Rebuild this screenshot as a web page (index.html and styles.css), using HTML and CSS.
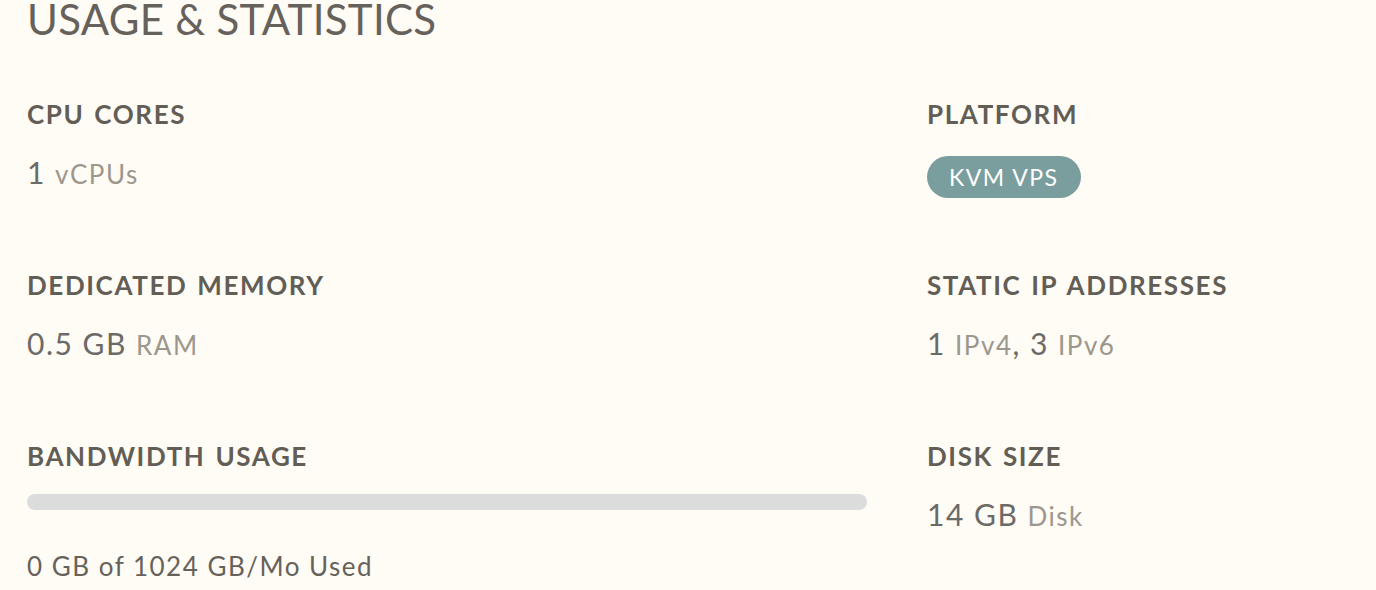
FILE: index.html
```html
<!DOCTYPE html>
<html lang="en">
<head>
    <meta charset="UTF-8">
    <meta name="viewport" content="width=device-width, initial-scale=1.0">
    <title>Usage &amp; Statistics</title>
    <link rel="stylesheet" href="styles.css">
</head>
<body>
    <div class="usage">
        <h2 class="usage-title">USAGE &amp; STATISTICS</h2>

        <div class="stats-grid">
            <div class="stat">
                <div class="stat-label">CPU CORES</div>
                <div class="stat-value">1 <span class="unit">vCPUs</span></div>
            </div>
            <div class="stat">
                <div class="stat-label">PLATFORM</div>
                <span class="badge">KVM VPS</span>
            </div>

            <div class="stat">
                <div class="stat-label">DEDICATED MEMORY</div>
                <div class="stat-value">0.5 GB <span class="unit">RAM</span></div>
            </div>
            <div class="stat">
                <div class="stat-label">STATIC IP ADDRESSES</div>
                <div class="stat-value">1 <span class="unit">IPv4</span>, 3 <span class="unit">IPv6</span></div>
            </div>

            <div class="stat">
                <div class="stat-label">BANDWIDTH USAGE</div>
                <div class="progress">
                    <div class="progress-fill" style="width: 0%;"></div>
                </div>
                <div class="progress-text">0 GB of 1024 GB/Mo Used</div>
            </div>
            <div class="stat">
                <div class="stat-label">DISK SIZE</div>
                <div class="stat-value">14 GB <span class="unit">Disk</span></div>
            </div>
        </div>
    </div>
</body>
</html>
```

FILE: styles.css
```css
body {
    margin: 0;
    background-color: #fffbf5;
    font-family: Lato, "Noto Sans", sans-serif;
    color: #66625b;
}
.usage {
    padding: 0 0 0 27px;
}
.usage-title {
    margin: 0;
    font-size: 42px;
    line-height: 38px;
    font-weight: 400;
    letter-spacing: 0.3px;
    color: #66625b;
}
.stats-grid {
    display: grid;
    grid-template-columns: 900px 1fr;
    grid-auto-rows: 171px;
    margin-top: 61px;
}
.stat-label {
    font-size: 26px;
    line-height: 30px;
    font-weight: 700;
    letter-spacing: 1.6px;
    word-spacing: 2px;
    color: #625e56;
}
.stat-value {
    margin-top: 26px;
    font-size: 30px;
    line-height: 34px;
    letter-spacing: 1.5px;
    color: #6b6a67;
}
.unit {
    font-size: 26px;
    letter-spacing: 1.5px;
    color: #9c978d;
}
.badge {
    display: inline-block;
    margin-top: 27px;
    padding: 0 22px;
    height: 42px;
    line-height: 42px;
    border-radius: 21px;
    background-color: #7a9e9e;
    color: #fff;
    font-size: 23px;
    letter-spacing: 1.5px;
}
.progress {
    margin-top: 23px;
    width: 840px;
    height: 16px;
    border-radius: 8px;
    background-color: #dcdcdc;
    overflow: hidden;
}
.progress-fill {
    height: 100%;
    background-color: #7a9e9e;
}
.progress-text {
    margin-top: 41px;
    font-size: 26px;
    line-height: 30px;
    letter-spacing: 1.5px;
    color: #66625b;
}
```
